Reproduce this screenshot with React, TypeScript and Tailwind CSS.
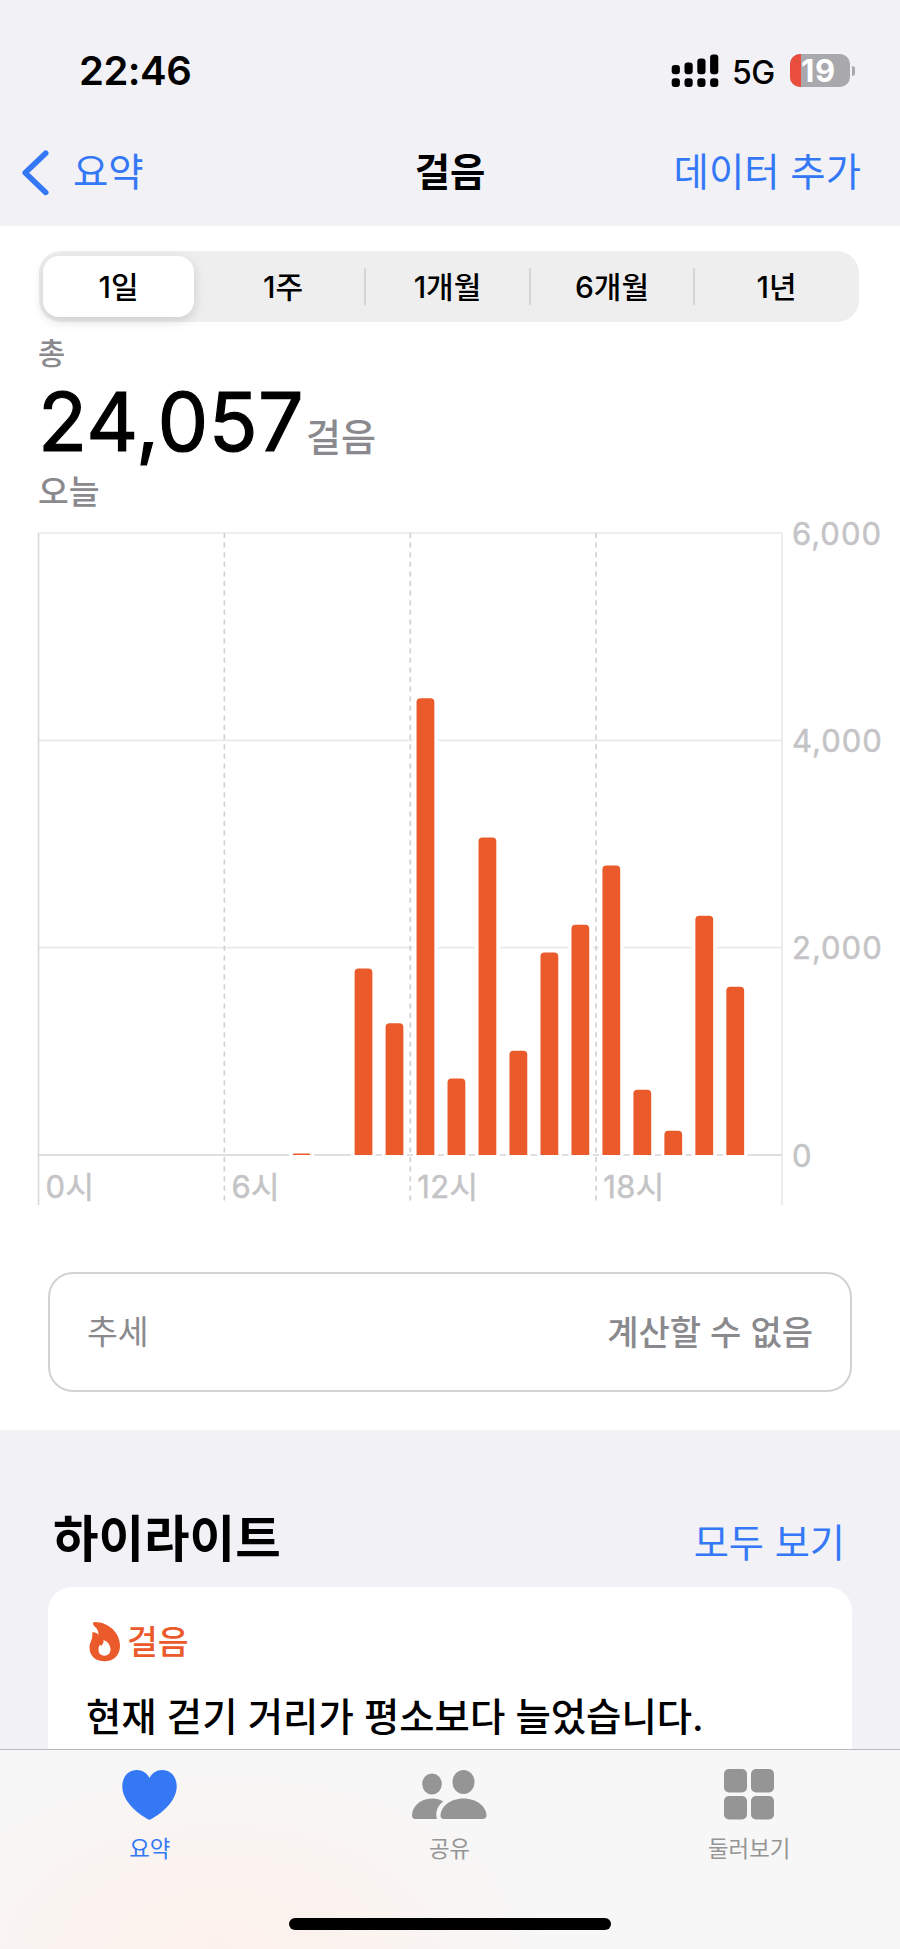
import { useState } from 'react'

type HourBar = { hour: number; steps: number }

const RANGES = ['1일', '1주', '1개월', '6개월', '1년']

const BARS: HourBar[] = [
  { hour: 8, steps: 15 },
  { hour: 10, steps: 1800 },
  { hour: 11, steps: 1270 },
  { hour: 12, steps: 4405 },
  { hour: 13, steps: 737 },
  { hour: 14, steps: 3062 },
  { hour: 15, steps: 1006 },
  { hour: 16, steps: 1953 },
  { hour: 17, steps: 2222 },
  { hour: 18, steps: 2792 },
  { hour: 19, steps: 629 },
  { hour: 20, steps: 234 },
  { hour: 21, steps: 2308 },
  { hour: 22, steps: 1624 },
]

const PLOT = { left: 38.5, right: 782, top: 13, bottom: 635, tail: 685 }
const MAX_STEPS = 6000
const BAR_WIDTH = 17.8

const hourX = (hour: number) => PLOT.left + ((PLOT.right - PLOT.left) * hour) / 24
const stepsY = (steps: number) => PLOT.bottom - ((PLOT.bottom - PLOT.top) * steps) / MAX_STEPS

// 위쪽 모서리만 둥근 막대
const barPath = (x: number, y: number, w: number) => {
  const r = Math.min(4, PLOT.bottom - y)
  return `M${x} ${PLOT.bottom}V${y + r}Q${x} ${y} ${x + r} ${y}H${x + w - r}Q${x + w} ${y} ${x + w} ${y + r}V${PLOT.bottom}Z`
}

function StatusBar() {
  return (
    <div className="flex h-[116px] items-end justify-between pl-[79px] pr-[45px]">
      <span className="h-[69px] text-[40px] leading-[48px] font-semibold tracking-[-0.5px]">22:46</span>
      <div className="flex h-[62px] items-start">
        <svg width="48" height="34" viewBox="0 0 48 34" className="mr-[13px]">
          {[11, 8.5, 4.5, 0.5].map((y, i) => (
            <g key={y}>
              <rect x={0.7 + i * 12.8} y={y} width="8.2" height={20.3 - y} rx="3" />
              <rect x={0.7 + i * 12.8} y="24.3" width="8.2" height="8.8" rx="3" />
            </g>
          ))}
        </svg>
        <span className="w-[58px] text-[32px] leading-[38px] font-medium tracking-[-0.5px]">5G</span>
        <div className="relative flex h-[33px] w-[60px] items-center justify-center rounded-[10px] bg-[#a9a9ad]">
          <span className="absolute inset-y-0 left-0 w-[11px] rounded-l-[10px] bg-[#eb4d3d]" />
          <span className="relative mr-[3px] text-[31px] leading-[33px] font-bold tracking-[0.8px] text-white">19</span>
        </div>
        <span className="mt-[12px] ml-[1.5px] h-[10px] w-[3.5px] rounded-r-full bg-[#a9a9ad]" />
      </div>
    </div>
  )
}

function NavBar() {
  return (
    <div className="grid h-[110px] grid-cols-3 items-start pt-[29px] text-[38.4px] leading-[54px]">
      <button type="button" className="flex items-start pl-[22px] text-[#3478f6]">
        <svg width="28" height="46" viewBox="0 0 28 46" fill="none" className="mt-[5px] mr-[23px]">
          <path d="M23.7 3.2L3.2 22.8L23.7 42.4" stroke="currentColor" strokeWidth="5.6" strokeLinecap="round" strokeLinejoin="round" />
        </svg>
        요약
      </button>
      <h1 className="text-center font-semibold">걸음</h1>
      <button type="button" className="pr-[39px] text-right text-[#3478f6]">데이터 추가</button>
    </div>
  )
}

function RangePicker() {
  const [active, setActive] = useState(0)
  return (
    <div className="mr-[41px] ml-[39px] flex h-[71px] items-center rounded-[22px] bg-[#eeeeef] pl-[4px]">
      {RANGES.map((label, i) => (
        <div key={label} className="flex items-center">
          <button
            type="button"
            onClick={() => setActive(i)}
            className={`h-[61px] w-[151px] rounded-[16px] text-[30px] leading-[58px] font-medium ${
              i === active ? 'bg-white shadow-[0_4px_12px_rgba(0,0,0,0.14)]' : ''
            }`}
          >
            {label}
          </button>
          {i < RANGES.length - 1 && (
            <span className={`mx-[5.75px] h-[37px] w-[2px] ${i !== active && i + 1 !== active ? 'bg-[#d5d5d9]' : ''}`} />
          )}
        </div>
      ))}
    </div>
  )
}

function Summary() {
  const total = BARS.reduce((sum, b) => sum + b.steps, 0)
  return (
    <div className="h-[198px] pl-[38px] font-medium text-[#8a8a8e]">
      <p className="h-[61px] pt-[9px] text-[29.5px] leading-[44px]">총</p>
      <p className="flex h-[77px] items-baseline text-[38px] leading-[78px]">
        <span className="text-[80.5px] font-normal tracking-[0.4px] text-black [-webkit-text-stroke:1.2px_black]">
          {total.toLocaleString('en-US')}
        </span>
        <span className="ml-[2px]">걸음</span>
      </p>
      <p className="pt-[8px] text-[33.5px] leading-[48px]">오늘</p>
    </div>
  )
}

function StepsChart() {
  return (
    <svg width="900" height="696" viewBox="0 0 900 696" className="block overflow-visible" fontSize="31">
      {[0, 2000, 4000, 6000].map((v) => (
        <g key={v}>
          <line x1={PLOT.left} x2={PLOT.right} y1={stepsY(v)} y2={stepsY(v)} stroke={v === 0 ? '#d5d5da' : '#e9e9eb'} strokeWidth="1.6" />
          <text x="792" y={stepsY(v) + 11.5} fill="#c4c4c6" stroke="#c4c4c6" strokeWidth="0.5" letterSpacing="1">
            {v.toLocaleString('en-US')}
          </text>
        </g>
      ))}
      <line x1={PLOT.left} x2={PLOT.left} y1={PLOT.top} y2={PLOT.tail} stroke="#d8d8dc" strokeWidth="1.6" />
      <line x1={PLOT.right} x2={PLOT.right} y1={PLOT.top} y2={PLOT.tail} stroke="#e9e9eb" strokeWidth="1.6" />
      {[6, 12, 18].map((h) => (
        <line key={h} x1={hourX(h)} x2={hourX(h)} y1={PLOT.top} y2={PLOT.tail} stroke="#cfcfd1" strokeWidth="1.6" strokeDasharray="5 4.6" />
      ))}
      {[0, 6, 12, 18].map((h) => (
        <text key={h} x={hourX(h) + 7} y="677.5" fill="#c4c4c6" stroke="#c4c4c6" strokeWidth="0.5" letterSpacing="0.4">{h}시</text>
      ))}
      {BARS.map(({ hour, steps }) => {
        const x = hourX(hour) + 6.3
        const y = stepsY(steps)
        return (
          <g key={hour}>
            {/* 격자선과 막대 사이의 흰 여백 */}
            <rect x={x - 3.5} y={y - 1} width={BAR_WIDTH + 7} height={PLOT.bottom - y + 2} fill="#fff" />
            <path d={barPath(x, y, BAR_WIDTH)} fill="#ea5a2a" />
          </g>
        )
      })}
    </svg>
  )
}

function TrendCard() {
  return (
    <div className="mx-[48px] mt-[56px] mb-[38px] flex h-[120px] items-center justify-between rounded-[25px] border-2 border-[#d1d1d6] px-[37px] text-[33.5px] text-[#8a8a8e]">
      <span>추세</span>
      <span className="text-[34px] font-medium">계산할 수 없음</span>
    </div>
  )
}

function Highlights() {
  return (
    <section className="h-[319px] overflow-hidden px-[48px] pt-[72px]">
      <div className="flex h-[85px] items-start justify-between pr-[7px] pl-[5px]">
        <h2 className="pt-[2px] text-[49.5px] leading-[70px] font-bold">하이라이트</h2>
        <button type="button" className="pt-[14px] text-[38.2px] leading-[54px] text-[#3478f6]">모두 보기</button>
      </div>
      <article className="h-[200px] rounded-t-[24px] bg-white px-[38px] pt-[31px]">
        <div className="flex h-[48px] items-center text-[33.5px] leading-[48px] font-medium text-[#ea5a2a]">
          <svg width="32" height="40" viewBox="0 0 32 40" className="mr-[6px] ml-[3px]">
            <path
              fillRule="evenodd"
              fill="currentColor"
              d="M4 1.8C3.6.8 4.6 0 6 0C19.500 0 31 11 31 23.500C31 33 25 39.300 15.500 39.300C6.500 39.300.5 34 .5 25.500C.5 20.500 3.300 18 3.300 13.500V10.500C5.800 10 8 11 9.500 13C9.500 8 7.500 6 4.800 3.800ZM14.500 18C15 21 13.500 22.500 12 24L11 22.500C9.800 24.500 9.500 26 9.500 28C9.500 31.500 12 33.700 15.500 33.700C19 33.700 21.500 31.300 21.500 27.500C21.500 23.500 19 19.500 14.500 18Z"
            />
          </svg>
          걸음
        </div>
        <p className="pt-[24px] text-[38.4px] leading-[54px] font-medium whitespace-nowrap">현재 걷기 거리가 평소보다 늘었습니다.</p>
      </article>
    </section>
  )
}

const HeartIcon = () => (
  <svg width="56" height="52" viewBox="0 0 56 52" fill="currentColor">
    <path d="M27.500 50.800C24.500 50 .3 36 .3 17.500C.3 7.500 6.500 1 14.800 1C20.500 1 25 4 27.500 9C30 4 34.500 1 40.200 1C48.500 1 54.700 7.500 54.700 17.500C54.700 36 30.500 50 27.500 50.800Z" />
  </svg>
)

const PeopleIcon = () => (
  <svg width="76" height="52" viewBox="0 0 76 52" fill="currentColor">
    <ellipse cx="21" cy="15" rx="9.800" ry="10.500" />
    <path d="M4.300 50C2 50 1 48.500 1 46.500C1 38.500 8.500 29.500 21 29.500C25.500 29.500 29.300 30.500 32.300 32.500C26.500 36.500 24 43 26 50Z" />
    <ellipse cx="52.500" cy="13" rx="11" ry="12" />
    <path d="M33 50C30.500 50 29.500 48.800 29.500 46.500C29.500 38.500 38.500 29.500 52.500 29.500C66.500 29.500 75.500 38.500 75.500 46.500C75.500 48.800 74 50 71.500 50Z" />
  </svg>
)

const GridIcon = () => (
  <svg width="50" height="52" viewBox="0 0 50 52" fill="currentColor">
    <rect x="0" y="0" width="23" height="23.500" rx="5" />
    <rect x="27" y="0" width="23" height="23.500" rx="5" />
    <rect x="0" y="27" width="23" height="23.500" rx="5" />
    <rect x="27" y="27" width="23" height="23.500" rx="5" />
  </svg>
)

const TABS = [
  { label: '요약', Icon: HeartIcon, active: true },
  { label: '공유', Icon: PeopleIcon, active: false },
  { label: '둘러보기', Icon: GridIcon, active: false },
]

function TabBar() {
  return (
    <footer className="h-[200px] border-t border-[#b9b9bc] bg-[#f7f7f7] bg-[radial-gradient(ellipse_330px_190px_at_220px_200px,#fdf1ed_0%,#fbf3ef_40%,#f7f7f7_100%)]">
      <nav className="grid h-[168px] w-[899px] grid-cols-3 pt-[19px]">
        {TABS.map(({ label, Icon, active }) => (
          <button key={label} type="button" className={`flex flex-col items-center ${active ? 'text-[#3478f6]' : 'text-[#959595]'}`}>
            <Icon />
            <span className="pt-[12px] text-[22.4px] leading-[32px]">{label}</span>
          </button>
        ))}
      </nav>
      <div className="mx-auto h-[12px] w-[322px] rounded-full bg-black" />
    </footer>
  )
}

export default function App() {
  return (
    <div className="h-[1949px] w-[900px] overflow-hidden bg-[#f1f1f6] font-[Inter,'Noto_Sans_CJK_KR',sans-serif] text-black">
      <header>
        <StatusBar />
        <NavBar />
      </header>
      <main>
        <div className="flow-root bg-white pt-[25px]">
          <RangePicker />
          <Summary />
          <StepsChart />
          <TrendCard />
        </div>
        <Highlights />
      </main>
      <TabBar />
    </div>
  )
}
